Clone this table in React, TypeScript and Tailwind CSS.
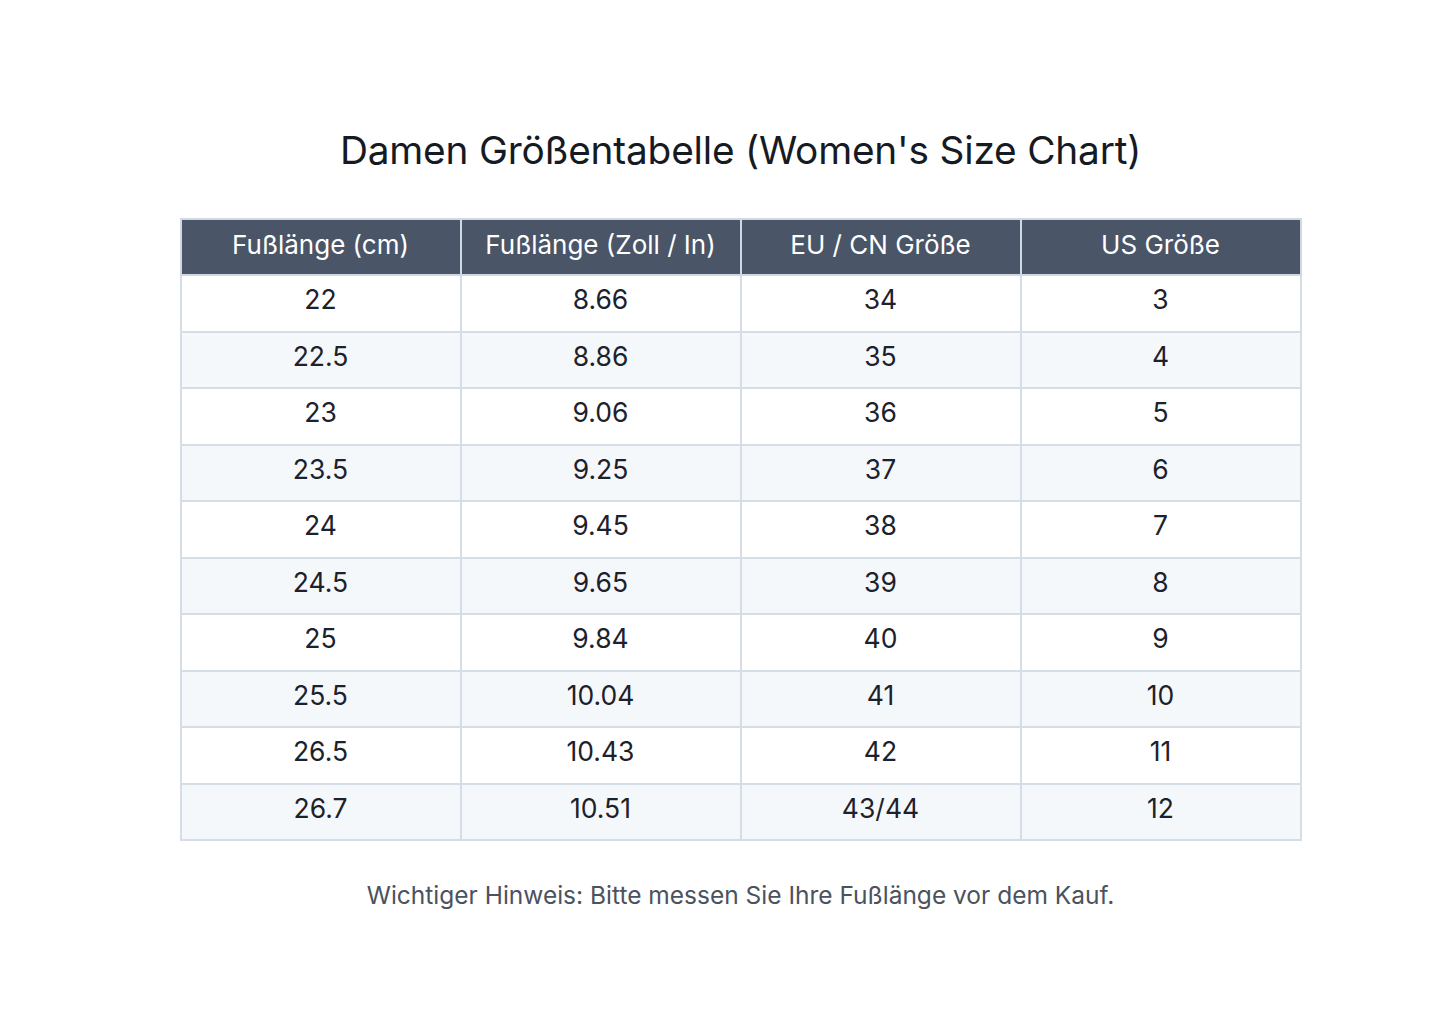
import React from "react";

const rows = [
  ["22", "8.66", "34", "3"],
  ["22.5", "8.86", "35", "4"],
  ["23", "9.06", "36", "5"],
  ["23.5", "9.25", "37", "6"],
  ["24", "9.45", "38", "7"],
  ["24.5", "9.65", "39", "8"],
  ["25", "9.84", "40", "9"],
  ["25.5", "10.04", "41", "10"],
  ["26.5", "10.43", "42", "11"],
  ["26.7", "10.51", "43/44", "12"],
];

const headers = ["Fußlänge (cm)", "Fußlänge (Zoll / In)", "EU / CN Größe", "US Größe"];

export default function App() {
  return (
    <div
      className="w-[1445px] h-[1032px] bg-white pl-[36px] flex flex-col items-center"
      style={{ fontFamily: "Inter, 'Noto Sans', sans-serif" }}
    >
      <h1 className="mt-[124px] text-[38.8px] leading-[52px] text-[#161a22] font-normal tracking-[-0.2px]">
        Damen Größentabelle (Women's Size Chart)
      </h1>
      <table className="mt-[42px] border-collapse border-2 border-[#cfd8e3] w-[1122px] table-fixed">
        <thead>
          <tr className="bg-[#4a5568]">
            {headers.map((h) => (
              <th
                key={h}
                className="h-[56px] pb-[6px] border-2 border-[#cfd8e3] text-white text-[26px] font-normal text-center"
              >
                {h}
              </th>
            ))}
          </tr>
        </thead>
        <tbody>
          {rows.map((r, i) => (
            <tr key={i} className={i % 2 === 1 ? "bg-[#f5f8fb]" : "bg-white"}>
              {r.map((c, j) => (
                <td
                  key={j}
                  className="h-[56.5px] pb-[6px] border-2 border-[#d5dde6] text-[26.5px] text-[#1c212b] text-center"
                >
                  {c}
                </td>
              ))}
            </tr>
          ))}
        </tbody>
      </table>
      <p className="mt-[36px] text-[24.5px] text-[#4b5260]">
        Wichtiger Hinweis: Bitte messen Sie Ihre Fußlänge vor dem Kauf.
      </p>
    </div>
  );
}
